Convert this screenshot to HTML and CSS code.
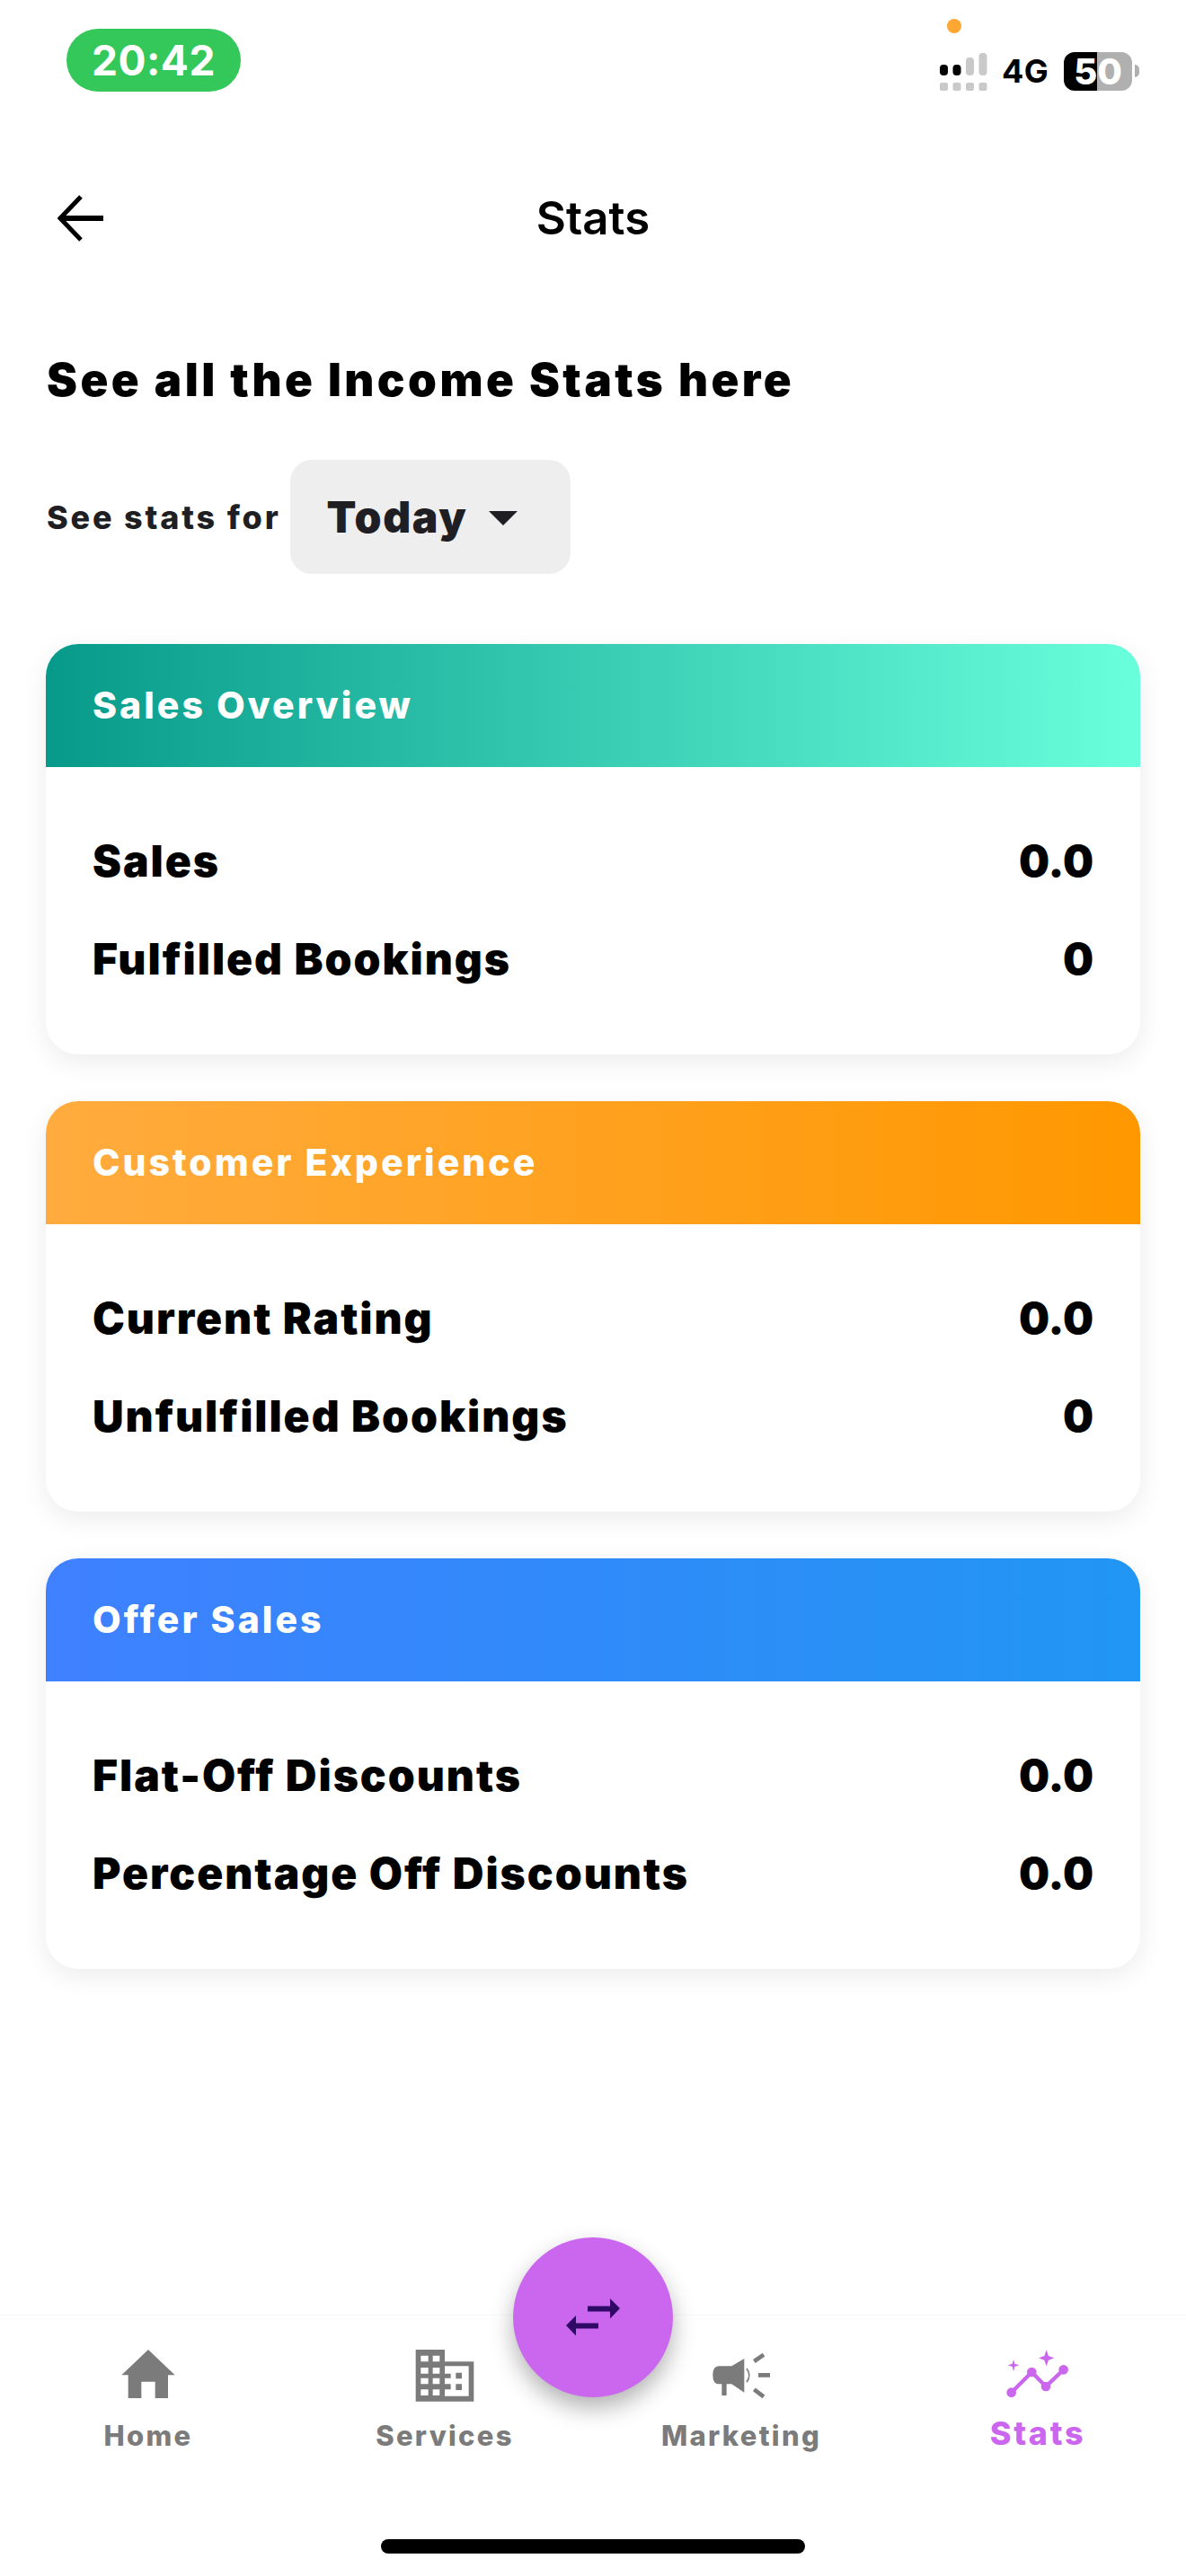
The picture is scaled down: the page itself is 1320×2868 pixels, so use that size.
FILE: index.html
```html
<!DOCTYPE html>
<html lang="en">
<head>
<meta charset="utf-8">
<title>Stats</title>
<link rel="stylesheet" href="styles.css">
</head>
<body>
<div class="screen">
  <header class="status">
    <div class="time">20:42</div>
    <div class="sys">
      <span class="dot"></span>
      <div class="sys-row">
        <svg class="signal" width="54" height="44" viewBox="0 0 54 44">
          <rect x="0" y="14" width="9" height="12" rx="4" fill="#000"/>
          <rect x="14.500" y="14" width="9" height="12" rx="4" fill="#000"/>
          <rect x="29" y="6" width="9" height="20" rx="4" fill="#c9c9c9"/>
          <rect x="43.500" y="1" width="9" height="25" rx="4" fill="#c9c9c9"/>
          <rect x="0" y="34" width="9" height="9" rx="2" fill="#c9c9c9"/>
          <rect x="14.500" y="34" width="9" height="9" rx="2" fill="#c9c9c9"/>
          <rect x="29" y="34" width="9" height="9" rx="2" fill="#c9c9c9"/>
          <rect x="43.500" y="34" width="9" height="9" rx="2" fill="#c9c9c9"/>
        </svg>
        <span class="net">4G</span>
        <div class="battery"><span class="battery-num">50</span></div>
        <span class="battery-tip"></span>
      </div>
    </div>
  </header>

  <div class="appbar">
    <svg class="back" width="52" height="52" viewBox="0 0 52 52">
      <path d="M51 26H5" fill="none" stroke="#000" stroke-width="6"/>
      <path d="M26 2 3 26l23 24" fill="none" stroke="#000" stroke-width="5"/>
    </svg>
    <h1 class="title">Stats</h1>
  </div>

  <main class="content">
    <h2 class="headline">See all the Income Stats here</h2>
    <div class="filter">
      <span class="filter-label">See stats for</span>
      <div class="select">
        <span class="select-value">Today</span>
        <span class="caret"></span>
      </div>
    </div>

    <section class="card">
      <div class="card-head head-teal">Sales Overview</div>
      <div class="card-body">
        <div class="row"><span class="row-label">Sales</span><span>0.0</span></div>
        <div class="row"><span class="row-label">Fulfilled Bookings</span><span>0</span></div>
      </div>
    </section>

    <section class="card">
      <div class="card-head head-orange">Customer Experience</div>
      <div class="card-body">
        <div class="row"><span class="row-label">Current Rating</span><span>0.0</span></div>
        <div class="row"><span class="row-label">Unfulfilled Bookings</span><span>0</span></div>
      </div>
    </section>

    <section class="card">
      <div class="card-head head-blue">Offer Sales</div>
      <div class="card-body">
        <div class="row"><span class="row-label">Flat-Off Discounts</span><span>0.0</span></div>
        <div class="row"><span class="row-label">Percentage Off Discounts</span><span>0.0</span></div>
      </div>
    </section>
  </main>

  <nav class="tabbar">
    <button class="fab" type="button" aria-label="Switch">
      <svg width="60" height="48" viewBox="0 0 60 48">
        <path d="M24 11.500H49V3L60 14 49 25.500V17.500H24Z" fill="#2e0a66"/>
        <path d="M36 30.500H11V22L0 33 11 44.500V36.500H36Z" fill="#2e0a66"/>
      </svg>
    </button>
    <div class="tabs">
      <div class="tab">
        <svg class="tab-icon" width="100" height="90" viewBox="0 0 300 270">
          <path d="M150 45 61 130H83V207H127V152H173V207H216V130H239Z" fill="#7b7b7b"/>
        </svg>
        <span class="tab-label">Home</span>
      </div>
      <div class="tab">
        <svg class="tab-icon" width="100" height="90" viewBox="-15 0 300 270">
          <path fill-rule="evenodd" fill="#7b7b7b" d="M38 45H135V85H232V218H38ZM55 65V85H80V65ZM95 65V85H118V65ZM55 105V125H80V105ZM95 105V125H118V105ZM55 140V160H80V140ZM95 140V160H118V140ZM55 178V198H80V178ZM95 178V198H118V178ZM135 100V125H155V140H135V160H155V178H135V200H215V100ZM172 122H192V142H172ZM172 160H192V180H172Z"/>
        </svg>
        <span class="tab-label">Services</span>
      </div>
      <div class="tab">
        <svg class="tab-icon" width="100" height="90" viewBox="-15 0 300 270">
          <path fill="#7b7b7b" d="M60 100H103L145 75V188L103 160H86V198H70V160H60Q40 160 40 130 40 100 60 100Z"/>
          <path fill="none" stroke="#7b7b7b" stroke-width="5" d="M153 108Q170 130 153 154"/>
          <path fill="none" stroke="#7b7b7b" stroke-width="14" d="M178 84 210 62M192 130H231M178 178 210 202"/>
        </svg>
        <span class="tab-label">Marketing</span>
      </div>
      <div class="tab">
        <svg class="tab-icon" width="100" height="90" viewBox="0 0 300 270">
          <path fill="none" stroke="#cb66ee" stroke-width="13" d="M62 188 130 120 177 168 236 112"/>
          <circle cx="62" cy="188" r="16" fill="#cb66ee"/>
          <circle cx="130" cy="120" r="16" fill="#cb66ee"/>
          <circle cx="177" cy="168" r="16" fill="#cb66ee"/>
          <circle cx="236" cy="112" r="16" fill="#cb66ee"/>
          <path fill="#cb66ee" d="M179 46 186 66 205 73 186 80 179 100 172 80 153 73 172 66Z"/>
          <path fill="#cb66ee" d="M69 78 73 92 88 97 73 102 69 118 65 102 50 97 65 92Z"/>
        </svg>
        <span class="tab-label tab-label-active">Stats</span>
      </div>
    </div>
    <div class="home-indicator"></div>
  </nav>
</div>
</body>
</html>
```

FILE: styles.css
```css
* {
  box-sizing: border-box;
}

html,
body {
  margin: 0;
  padding: 0;
  background: #fff;
}

body {
  font-family: Inter, "Liberation Sans", sans-serif;
  color: #000;
}

.screen {
  width: 1320px;
  height: 2868px;
  display: flex;
  flex-direction: column;
  overflow: hidden;
}

/* status bar */
.status {
  height: 198px;
  padding: 21px 52px 0 74px;
  display: flex;
  justify-content: space-between;
  align-items: flex-start;
}

.time {
  width: 194px;
  height: 70px;
  margin-top: 11px;
  border-radius: 35px;
  background: #34c759;
  color: #fff;
  font-size: 46px;
  font-weight: 700;
  letter-spacing: 0.5px;
  line-height: 70px;
  text-align: center;
}

.sys {
  display: flex;
  flex-direction: column;
  align-items: flex-start;
}

.dot {
  width: 16px;
  height: 16px;
  margin: 0 0 20px 8px;
  border-radius: 50%;
  background: #ffa733;
}

.sys-row {
  display: flex;
  align-items: center;
  height: 44px;
}

.signal {
  display: block;
  margin-top: 2px;
}

.net {
  margin-left: 15px;
  width: 69px;
  font-size: 36px;
  font-weight: 700;
  letter-spacing: 0.5px;
  line-height: 44px;
}

.battery {
  width: 76px;
  height: 43px;
  border-radius: 12px;
  background: linear-gradient(90deg, #000 0 37px, #b0b0b0 37px);
  color: #fff;
  text-align: center;
}

.battery-num {
  font-size: 40px;
  font-weight: 800;
  line-height: 43px;
}

.battery-tip {
  width: 5px;
  height: 14px;
  margin-left: 3px;
  border-radius: 0 7px 7px 0;
  background: #b0b0b0;
}

/* app bar */
.appbar {
  height: 90px;
  padding-left: 64px;
  display: grid;
  grid-template-columns: 52px 1fr 116px;
  align-items: center;
}

.title {
  margin: 0;
  font-size: 51px;
  font-weight: 600;
  line-height: 90px;
  text-align: center;
}

/* content */
.content {
  padding: 0 51px;
  display: flex;
  flex-direction: column;
}

.headline {
  margin: 105px 0 0 1px;
  font-size: 51px;
  font-weight: 900;
  letter-spacing: 3.45px;
  line-height: 60px;
}

.filter {
  margin: 59px 0 78px 1px;
  display: flex;
  align-items: center;
  gap: 10px;
}

.filter-label {
  font-size: 36px;
  font-weight: 800;
  letter-spacing: 2.8px;
  color: #1f1f23;
}

.select {
  width: 312px;
  height: 127px;
  padding-left: 41px;
  border-radius: 24px;
  background: #eee;
  display: flex;
  align-items: center;
}

.select-value {
  font-size: 48px;
  font-weight: 900;
  letter-spacing: 1.7px;
  color: #1f1f23;
}

.caret {
  margin: 2px 0 0 24px;
  width: 0;
  height: 0;
  border-left: 16px solid transparent;
  border-right: 16px solid transparent;
  border-top: 16px solid #1f1f23;
}

/* cards */
.card {
  height: 457px;
  margin-bottom: 52px;
  border-radius: 36px;
  background: #fff;
  box-shadow: 0 8px 30px rgba(0, 0, 0, 0.08);
  overflow: hidden;
}

.card-head {
  height: 137px;
  padding-left: 52px;
  color: #fff;
  font-size: 41px;
  font-weight: 800;
  letter-spacing: 3px;
  line-height: 137px;
}

.head-teal {
  background: linear-gradient(90deg, #079a8a, #69ffdc);
}

.head-orange {
  background: linear-gradient(90deg, #ffab3e, #ff9800);
}

.head-blue {
  background: linear-gradient(90deg, #3f80ff, #2196f3);
}

.card-body {
  padding: 50px 52px 52px 52px;
}

.row {
  height: 109px;
  display: flex;
  justify-content: space-between;
  align-items: center;
  font-size: 48px;
  font-weight: 900;
}

.row-label {
  letter-spacing: 1.95px;
}

/* tab bar */
.tabbar {
  position: relative;
  margin-top: auto;
  height: 291px;
  padding-top: 23px;
  border-top: 1px solid #f7f7f7;
}

.fab {
  position: absolute;
  left: 571px;
  top: -87px;
  width: 178px;
  height: 178px;
  padding: 0;
  border: 0;
  border-radius: 50%;
  background: #cb66ee;
  box-shadow: 0 12px 26px rgba(0, 0, 0, 0.3);
  display: flex;
  align-items: center;
  justify-content: center;
}

.tabs {
  display: grid;
  grid-template-columns: repeat(4, 330px);
}

.tab {
  display: flex;
  flex-direction: column;
  align-items: center;
}

.tab-icon {
  display: block;
}

.tab-label {
  margin-top: 2px;
  font-size: 31px;
  font-weight: 800;
  letter-spacing: 2.3px;
  color: #7b7b7b;
}

.tab-label-active {
  margin-top: -4px;
  font-size: 36px;
  letter-spacing: 2.7px;
  color: #cb66ee;
}

.home-indicator {
  position: absolute;
  left: 424px;
  top: 249px;
  width: 472px;
  height: 16px;
  border-radius: 8px;
  background: #000;
}
```
